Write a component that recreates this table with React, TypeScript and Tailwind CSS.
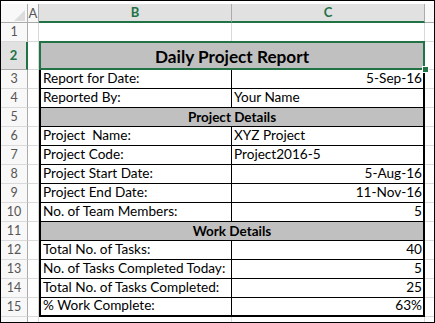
import React from "react";

const GREEN = "#217346";

function RowHead({ n, selected }: { n: number | string; selected?: boolean }) {
  return selected ? (
    <div className="w-[27px] shrink-0 flex items-center justify-center bg-[#e1e1e1] border-b border-[#ababab] border-r-2 border-r-[#217346] text-[#217346] text-[13px] font-bold">
      {n}
    </div>
  ) : (
    <div className="w-[27px] shrink-0 flex items-center justify-center bg-[#f8f8f8] border-b border-b-[#dadada] border-r border-r-[#ababab] text-[#555555] text-[12.5px]">
      {n}
    </div>
  );
}

function ColA() {
  return <div className="w-[11px] shrink-0 border-r border-b border-[#d9d9d9]" />;
}

function ColD() {
  return <div className="flex-1 border-b border-[#d9d9d9]" />;
}

type R = { label: string; value?: string; right?: boolean };

function DataRow({ n, r, last }: { n: number; r: R; last?: boolean }) {
  const bb = last ? "border-b-2" : "border-b";
  return (
    <div className="flex h-[19px]">
      <RowHead n={n} />
      <ColA />
      <div className={`w-[193px] shrink-0 border-l-2 border-r ${bb} border-black flex items-end pl-[2px] pb-[2px] leading-none whitespace-pre`}>
        {r.label}
      </div>
      <div className={`w-[193px] shrink-0 border-r-2 ${bb} border-black flex items-end pb-[2px] leading-none ${r.right ? "justify-end pr-[1px]" : "pl-[2px]"}`}>
        {r.value}
      </div>
      <ColD />
    </div>
  );
}

function SectionRow({ n, title }: { n: number; title: string }) {
  return (
    <div className="flex h-[19px]">
      <RowHead n={n} />
      <ColA />
      <div className="w-[386px] shrink-0 border-l-2 border-r-2 border-b border-black bg-[#c0c0c0] flex items-end justify-center pb-[2px] leading-none font-bold text-[13.5px]">
        {title}
      </div>
      <ColD />
    </div>
  );
}

export default function App() {
  const top: R[] = [
    { label: "Report for Date:", value: "5-Sep-16", right: true },
    { label: "Reported By:", value: "Your Name" },
  ];
  const proj: R[] = [
    { label: "Project  Name:", value: "XYZ Project" },
    { label: "Project Code:", value: "Project2016-5" },
    { label: "Project Start Date:", value: "5-Aug-16", right: true },
    { label: "Project End Date:", value: "11-Nov-16", right: true },
    { label: "No. of Team Members:", value: "5", right: true },
  ];
  const work: R[] = [
    { label: "Total No. of Tasks:", value: "40", right: true },
    { label: "No. of Tasks Completed Today:", value: "5", right: true },
    { label: "Total No. of Tasks Completed:", value: "25", right: true },
    { label: "% Work Complete:", value: "63%", right: true },
  ];

  return (
    <div
      className="w-[435px] h-[323px] border border-black bg-white overflow-hidden text-[13.6px] text-black"
      style={{ fontFamily: "Lato, 'Liberation Sans', sans-serif" }}
    >
      <div className="h-[3px]" />
      <div className="flex h-[19px]">
        <div className="w-[27px] shrink-0 bg-[#f8f8f8] border-r border-b border-[#ababab] flex items-end justify-end pr-[2px] pb-[1px]">
          <svg width="11" height="11" viewBox="0 0 11 11">
            <polygon points="11,0 11,11 0,11" fill="#dcdcdc" />
          </svg>
        </div>
        <div className="w-[11px] shrink-0 bg-[#f8f8f8] border-r border-b border-[#ababab] flex items-center justify-center text-[#555555] text-[13px] leading-none">
          A
        </div>
        <div className="w-[193px] shrink-0 bg-[#e1e1e1] border-r border-r-[#ababab] border-b-2 border-b-[#217346] flex items-center justify-center text-[#217346] text-[13px] font-bold leading-none">
          B
        </div>
        <div className="w-[193px] shrink-0 bg-[#e1e1e1] border-r border-r-[#ababab] border-b-2 border-b-[#217346] flex items-center justify-center text-[#217346] text-[13px] font-bold leading-none">
          C
        </div>
        <div className="flex-1 bg-[#f8f8f8] border-b border-[#ababab]" />
      </div>
      <div className="flex h-[19px]">
        <RowHead n={1} />
        <ColA />
        <div className="w-[193px] shrink-0 border-r border-[#d9d9d9]" />
        <div className="w-[193px] shrink-0 border-r border-[#d9d9d9]" />
        <ColD />
      </div>
      <div className="flex h-[28px]">
        <RowHead n={2} selected />
        <ColA />
        <div className="relative w-[386px] shrink-0 border-b border-black bg-[#c0c0c0] flex items-end justify-center pb-[4px] leading-none font-bold text-[17.2px]">
          Daily Project Report
          <div
            className="absolute -top-[1px] left-0 right-0 -bottom-[1px] border-2"
            style={{ borderColor: GREEN }}
          />
          <div className="absolute -right-[4px] -bottom-[4px] w-[7px] h-[7px] bg-[#217346] border border-white z-10" />
        </div>
        <ColD />
      </div>
      {top.map((r, i) => (
        <DataRow key={r.label} n={3 + i} r={r} />
      ))}
      <SectionRow n={5} title="Project Details" />
      {proj.map((r, i) => (
        <DataRow key={r.label} n={6 + i} r={r} />
      ))}
      <SectionRow n={11} title="Work Details" />
      {work.map((r, i) => (
        <DataRow key={r.label} n={12 + i} r={r} last={i === work.length - 1} />
      ))}
      <div className="flex h-[5px]">
        <div className="w-[27px] shrink-0 bg-[#f8f8f8] border-r border-[#ababab]" />
        <div className="w-[11px] shrink-0 border-r border-[#d9d9d9]" />
        <div className="w-[193px] shrink-0 border-r border-[#d9d9d9]" />
        <div className="w-[193px] shrink-0 border-r border-[#d9d9d9]" />
        <div className="flex-1" />
      </div>
    </div>
  );
}
